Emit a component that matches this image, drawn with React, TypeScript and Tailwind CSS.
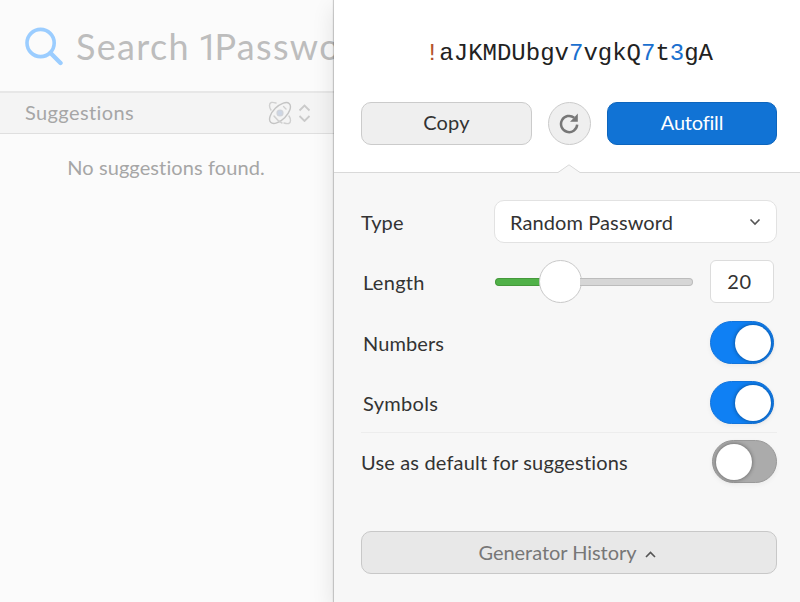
import React from "react";

function Toggle({ on }: { on: boolean }) {
  return (
    <div
      className={
        "flex h-[43px] items-center rounded-full border shadow-[0_2px_5px_rgba(0,0,0,0.05)] " +
        (on
          ? "w-[64px] justify-end border-[#1274dc] bg-[#0f80f4] pr-[2px]"
          : "w-[65px] justify-start border-[#999] bg-[#ababab] pl-[3px]")
      }
    >
      <div className="size-[36px] rounded-full bg-white shadow-[0_0_4px_rgba(0,0,0,0.45)]" />
    </div>
  );
}

function SearchPane() {
  return (
    <div className="h-full w-[334px] shrink-0 overflow-hidden bg-[#fbfbfb]">
      <div className="flex h-[91px] items-center whitespace-nowrap pl-[24px]">
        <svg width="40" height="40" viewBox="0 0 40 40" fill="none" stroke="#9bcdff" className="shrink-0">
          <circle cx="16.6" cy="17" r="13.6" strokeWidth="3.6" />
          <path d="M26.5 27 L36.5 37" strokeWidth="4.4" strokeLinecap="round" />
        </svg>
        <div className="pl-[12px] pt-[2px] text-[36px] leading-[44px] tracking-[1.3px] text-[#bdbdbd]">
          Search<span className="-ml-[2px] font-['Roboto'] font-normal"> 1</span><span className="-ml-[5px]">Password</span>
        </div>
      </div>
      <div className="flex h-[43px] items-center border-t-2 border-b border-t-[#e7e7e7] border-b-[#dfdfdf] bg-[#f4f4f4] pl-[25px]">
        <span className="w-[243px] pb-[2px] text-[20px] tracking-[0.4px] text-[#a6a6a6]">Suggestions</span>
        <svg width="24" height="24" viewBox="0 0 24 24" fill="none" stroke="#c4c4c4" strokeWidth="1.4" strokeLinecap="round">
          <ellipse cx="12" cy="12" rx="13.2" ry="6.6" transform="rotate(-45 12 12)" />
          <path d="M8 2C4 .8 1.500 1 1.500 4.500C1.500 6 2 7.500 3 9M16 22C20 23.200 22.500 23 22.500 19.500C22.500 18 22 16.500 21 15M15.500 5.500L18 8M6 15C9 19 12 21 14 22" stroke="#d0d0d0" />
          <circle cx="12" cy="12" r="2.900" fill="#ccd5e4" stroke="#d1d4da" />
        </svg>
        <svg width="13" height="18" viewBox="0 0 13 18" fill="none" stroke="#cacaca" strokeWidth="1.8" className="ml-[6px]">
          <path d="M1.500 6.500L6.500 1.500L11.500 6.500M1.500 12L6.500 17L11.500 12" />
        </svg>
      </div>
      <div className="pt-[19px] pr-[2px] text-center text-[20px] leading-[28px] tracking-[0.1px] text-[#a6a6a6]">
        No suggestions found.
      </div>
    </div>
  );
}

function Generator() {
  return (
    <div className="relative flex h-full flex-1 flex-col bg-[#f7f7f7] shadow-[-1px_0_1px_rgba(0,0,0,0.18),0_8px_22px_rgba(0,0,0,0.11)]">
      <div className="h-[173px] border-b border-[#d9d9d9] bg-white pl-[27px] pr-[23px]">
        <div className="flex h-[102px] items-center justify-center whitespace-pre pt-[6px] font-['Liberation_Mono',monospace] text-[24px] text-[#222]">
          <span className="text-[#b5532c]">!</span>aJKMDUbgv<span className="text-[#1a70cf]">7</span>vgkQ
          <span className="text-[#1a70cf]">7</span>t<span className="text-[#1a70cf]">3</span>gA
        </div>
        <div className="flex justify-between">
          <button className="h-[43px] w-[171px] rounded-[10px] border border-[#cbcbcb] bg-[#efefef] pb-[3px] text-[20px] tracking-[0.2px] text-[#333]">Copy</button>
          <button className="flex size-[43px] items-center justify-center rounded-full border border-[#cbcbcb] bg-[#efefef]">
            <svg width="21" height="21" viewBox="0 0 21 21" fill="none">
              <path d="M15.200 4.700A8.100 8.100 0 1 0 18.200 11.700" stroke="#777" strokeWidth="2.500" />
              <path d="M18.800 .5V8.800H11L14.500 5.200Z" fill="#777" />
            </svg>
          </button>
          <button className="h-[43px] w-[170px] rounded-[10px] border border-[#0d65bd] bg-[#1173d5] pb-[3px] text-[20px] tracking-[-0.2px] text-white">Autofill</button>
        </div>
      </div>
      <svg width="24" height="10" viewBox="0 0 24 10" className="absolute left-[223px] top-[164px]">
        <path d="M0 8.500L12 .8L24 8.500V10H0Z" fill="#f7f7f7" />
        <path d="M0 8.500H1L12 .8L23 8.500H24" fill="none" stroke="#d9d9d9" />
      </svg>
      <div className="flex flex-1 flex-col pl-[27px] pr-[23px] pt-[27px] text-[20px] tracking-[0.1px] text-[#333]">
        <div className="flex h-[43px] items-center">
          <span className="w-[133px] pt-[1px]">Type</span>
          <div className="flex h-[43px] flex-1 items-center justify-between rounded-[10px] border border-[#e2e2e2] bg-white pl-[15px] pr-[15px]">
            <span>Random Password</span>
            <svg width="12" height="8" viewBox="0 0 12 8" fill="none" stroke="#555" strokeWidth="1.600"><path d="M1.500 1.500L6 6L10.500 1.500" /></svg>
          </div>
        </div>
        <div className="mt-[17px] flex h-[43px] items-center pl-[2px]">
          <span className="w-[132px] pt-[1px] tracking-[0.3px]">Length</span>
          <div className="flex w-[198px] items-center">
            <div className="mt-[1px] h-[8px] w-[46px] rounded-l-full border border-r-0 border-[#45993b] bg-[#50b148]" />
            <div className="-mx-[2px] size-[43px] shrink-0 rounded-full border border-[#c9c9c9] bg-white" />
            <div className="mt-[1px] h-[8px] flex-1 rounded-r-full border border-l-0 border-[#bcbcbc] bg-[#d6d6d6]" />
          </div>
          <div className="ml-[17px] flex h-[43px] w-[64px] items-center justify-center rounded-[6px] border border-[#dcdcdc] bg-white pr-[5px] pb-[2px] tracking-[0.6px]">20</div>
        </div>
        <div className="mt-[18px] flex h-[43px] items-center justify-between pl-[2px] pr-[3px]">
          <span className="pt-[1px]">Numbers</span><Toggle on />
        </div>
        <div className="mt-[17px] flex h-[43px] items-center justify-between pl-[2px] pr-[3px]">
          <span className="pt-[1px] tracking-[0.3px]">Symbols</span><Toggle on />
        </div>
        <div className="mt-[8px] h-px shrink-0 bg-[#ededed]" />
        <div className="mt-[7px] flex h-[43px] items-center justify-between">
          <span className="pt-[1px] tracking-[0.17px]">Use as default for suggestions</span><Toggle on={false} />
        </div>
        <button className="mt-[48px] flex h-[43px] items-center justify-center gap-[9px] rounded-[10px] border border-[#c8c8c8] bg-[#e8e8e8] pr-[3px] tracking-[-0.05px] text-[#777]">
          <span className="pb-[1px]">Generator History</span>
          <svg width="11" height="7" viewBox="0 0 11 7" fill="none" stroke="#555" strokeWidth="1.600" className="mt-[3px]"><path d="M1 6L5.500 1.500L10 6" /></svg>
        </button>
      </div>
    </div>
  );
}

export default function App() {
  return (
    <div className="flex h-[602px] w-[800px] overflow-hidden font-['Lato','Open_Sans',sans-serif]">
      <SearchPane />
      <Generator />
    </div>
  );
}
